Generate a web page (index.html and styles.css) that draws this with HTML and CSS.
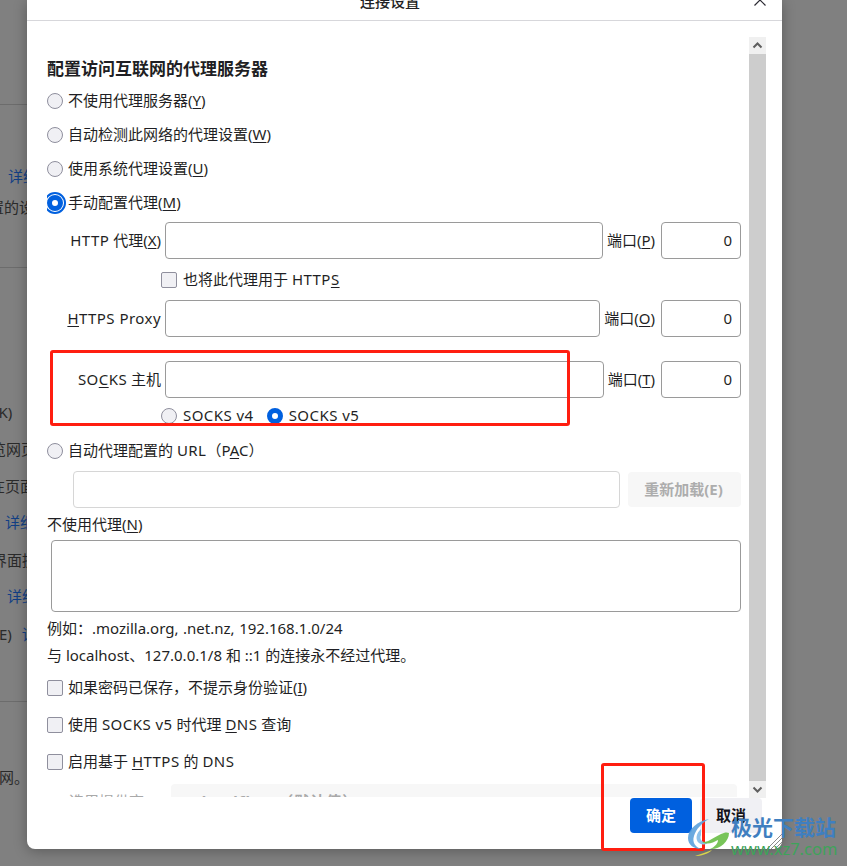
FILE: index.html
```html
<!DOCTYPE html>
<html lang="zh-CN">
<head>
<meta charset="utf-8">
<title>连接设置</title>
<link rel="stylesheet" href="styles.css">
</head>
<body>
<div class="page">
  <div class="page-rule r1"></div>
  <a class="frag link f1">详细信息</a>
  <div class="frag f2">置的设置</div>
  <div class="page-rule r2"></div>
  <div class="frag f3">(K)</div>
  <div class="frag f4">览网页</div>
  <div class="frag f5">在页面</div>
  <a class="frag link f6">详细</a>
  <div class="frag f7">界面提</div>
  <a class="frag link f8">详细</a>
  <div class="frag f9">E) <a class="link">详细</a></div>
  <div class="page-rule r3"></div>
  <div class="frag f10">网。</div>
</div>

<div class="dialog">
  <header class="dialog-head">
    <span class="dialog-title">连接设置</span>
    <svg class="close-icon" width="14" height="14" viewBox="0 0 14 14"><path d="M1.5 1.5 12.5 12.5M12.5 1.5 1.5 12.5" stroke="#2b2a33" stroke-width="1.2" fill="none"/></svg>
  </header>
  <div class="dialog-main">
    <div class="scroller">
      <h2 class="heading">配置访问互联网的代理服务器</h2>
      <label class="line m8"><input type="radio" name="p" class="radio"><span>不使用代理服务器(<u>Y</u>)</span></label>
      <label class="line m10"><input type="radio" name="p" class="radio"><span>自动检测此网络的代理设置(<u>W</u>)</span></label>
      <label class="line m10"><input type="radio" name="p" class="radio"><span>使用系统代理设置(<u>U</u>)</span></label>
      <label class="line m10"><input type="radio" name="p" class="radio focus" checked><span>手动配置代理(<u>M</u>)</span></label>

      <div class="proxy m7">
        <span class="proxy-label"><b class="la">HTTP</b> 代理(<u>X</u>)</span>
        <input class="field grow">
        <span class="port-label">端口(<u>P</u>)</span>
        <input class="field port" value="0">
      </div>
      <label class="line sub m9"><input type="checkbox" class="check"><span>也将此代理用于 <b class="la">HTTP<u>S</u></b></span></label>
      <div class="proxy m8">
        <span class="proxy-label"><b class="la"><u>H</u>TTPS Proxy</b></span>
        <input class="field grow">
        <span class="port-label">端口(<u>O</u>)</span>
        <input class="field port" value="0">
      </div>
      <div class="proxy m24">
        <span class="proxy-label"><b class="la">SO<u>C</u>KS</b> 主机</span>
        <input class="field grow">
        <span class="port-label">端口(<u>T</u>)</span>
        <input class="field port" value="0">
      </div>
      <div class="line sub versions m6">
        <label class="inline"><input type="radio" name="s" class="radio"><span>SOCKS v4</span></label>
        <label class="inline"><input type="radio" name="s" class="radio" checked><span>SOCKS v5</span></label>
      </div>
      <label class="line m11"><input type="radio" name="p" class="radio"><span>自动代理配置的 <b class="la">URL</b>（P<u>A</u>C）</span></label>
      <div class="pac m8">
        <input class="field grow off" disabled>
        <button class="reload" type="button">重新加载(E)</button>
      </div>
      <div class="line m5"><span>不使用代理(<u>N</u>)</span></div>
      <textarea class="field area m3"></textarea>
      <div class="line m5 tight"><span>例如：.mozilla.org, .net.nz, 192.168.1.0/24</span></div>
      <div class="line m3 flat"><span>与 localhost、127.0.0.1/8 和 ::1 的连接永不经过代理。</span></div>
      <label class="line m8"><input type="checkbox" class="check"><span>如果密码已保存，不提示身份验证(<u>I</u>)</span></label>
      <label class="line m13"><input type="checkbox" class="check"><span>使用 <b class="la">SOCKS v5</b> 时代理 <b class="la"><u>D</u>NS</b> 查询</span></label>
      <label class="line m13"><input type="checkbox" class="check"><span>启用基于 <b class="la"><u>H</u>TTPS</b> 的 <b class="la">DNS</b></span></label>
      <div class="provider">
        <span class="provider-label">选用提供商(P)</span>
        <span class="provider-select">Cloudflare（默认值）</span>
      </div>
    </div>
    <div class="scrollbar">
      <svg class="sb-arrow" width="17" height="17" viewBox="0 0 17 17"><path d="M4.5 10.5 8.5 6.5 12.5 10.5" stroke="#5f5f5f" stroke-width="2" fill="none"/></svg>
      <div class="sb-thumb"></div>
      <svg class="sb-arrow down" width="17" height="17" viewBox="0 0 17 17"><path d="M4.5 6.5 8.5 10.5 12.5 6.5" stroke="#5f5f5f" stroke-width="2" fill="none"/></svg>
    </div>
  </div>
  <footer class="dialog-foot">
    <button class="btn primary" type="button">确定</button>
    <button class="btn" type="button">取消</button>
  </footer>
  <svg class="resizer" width="16" height="16" viewBox="0 0 16 16"><path d="M1 16 16 1M5 16 16 5M9 16 16 9M13 16 16 13" stroke="#8a8a8a" stroke-width="1" fill="none"/></svg>
</div>

<div class="mark mark-socks"></div>
<div class="mark mark-ok"></div>

<div class="watermark">
  <svg class="wm-logo" width="42" height="42" viewBox="0 0 42 42">
    <path d="M21 4C10 6 0 14 0 23C0 30 6 34 13 34C7 32 4 27 6 21C8 14 14 8 21 4z" fill="#5aa0dc" opacity=".9"/>
    <path d="M13 14C8 18 7 25 11 28C16 31 20 29 19 27C15 28 11 25 13 20z" fill="#8cc0ea"/>
    <path d="M14 27C20 28 26 22 33 19C36 17.5 39 17 41 18C41 27 31 35 22 34C27 32 30 28 30 25C25 28 19 30 14 27z" fill="#6cbf4b" opacity=".92"/>
    <path d="M7 41C13 39 19 37 24 35C20 39 13 41 7 41z" fill="#d9d34a"/>
  </svg>
  <div class="wm-text">
    <span class="wm-name">极光下载站</span>
    <span class="wm-url">www.xz7.com</span>
  </div>
</div>
</body>
</html>
```
FILE: styles.css
```css
* { box-sizing: border-box; }
html, body { margin: 0; height: 100%; }
body {
  position: relative;
  width: 847px;
  height: 866px;
  overflow: hidden;
  background: #808080;
  font-family: "Noto Sans", "Noto Sans CJK SC", sans-serif;
  font-size: 15px;
  color: #1f1f24;
}
u { text-underline-offset: 2px; text-decoration-thickness: 1px; }
.la { font-weight: 400; letter-spacing: .45px; }

/* dimmed page behind the dialog */
.page {
  width: 27px;
  height: 866px;
  overflow: hidden;
  display: flex;
  flex-direction: column;
  color: #2a2a2a;
  line-height: 20px;
}
.page-rule { flex: none; height: 1px; width: 27px; background: #6c6c6c; }
.frag { flex: none; white-space: nowrap; height: 20px; }
.link { color: #123f85; }
.r1 { margin-top: 104px; }
.f1 { margin-top: 61px; margin-left: 8px; }
.f2 { margin-top: 11px; margin-left: -11px; }
.r2 { margin-top: 50px; }
.f3 { margin-top: 134px; margin-left: -6px; }
.f4 { margin-top: 17px; margin-left: -9px; }
.f5 { margin-top: 17px; margin-left: -10px; }
.f6 { margin-top: 16px; margin-left: 5px; }
.f7 { margin-top: 18px; margin-left: -8px; }
.f8 { margin-top: 16px; margin-left: 7px; }
.f9 { margin-top: 18px; margin-left: -1px; word-spacing: 6px; }
.r3 { margin-top: 57px; }
.f10 { margin-top: 65px; margin-left: -1px; }

/* dialog */
.dialog {
  position: absolute;
  left: 27px;
  top: 0;
  width: 755px;
  height: 849px;
  display: flex;
  flex-direction: column;
  background: #fff;
  border-radius: 0 0 8px 8px;
  box-shadow: 0 2px 14px rgba(0, 0, 0, .3);
}
.dialog-head {
  flex: none;
  height: 21px;
  border-bottom: 1px solid #d7d7db;
  display: flex;
  justify-content: space-between;
  overflow: hidden;
  padding: 0 15px 0 333px;
}
.dialog-title {
  font-size: 15px;
  font-weight: 500;
  line-height: 20px;
  margin-top: -9px;
  height: 20px;
  white-space: nowrap;
}
.close-icon { margin-top: -7px; }
.dialog-main {
  flex: none;
  height: 777px;
  display: flex;
  padding: 17px 16px 0 20px;
}
.scroller {
  width: 702px;
  height: 759px;
  overflow: hidden;
  flex: none;
}
.heading {
  margin: 19px 0 0;
  font-size: 17px;
  line-height: 24px;
  height: 24px;
  font-weight: 700;
  color: #1f1f24;
  white-space: nowrap;
}
.line {
  display: flex;
  align-items: center;
  height: 24px;
  width: 694px;
  white-space: nowrap;
  line-height: 24px;
}
.line span { margin-top: -2px; }
.tight { word-spacing: .7px; }
.sub { padding-left: 114px; }
.versions { gap: 13px; letter-spacing: .45px; }
.inline { display: flex; align-items: center; }
.m3 { margin-top: 3px; }
.m5 { margin-top: 5px; }
.m6 { margin-top: 6px; }
.m7 { margin-top: 7px; }
.m8 { margin-top: 8px; }
.m9 { margin-top: 9px; }
.m10 { margin-top: 10px; }
.m11 { margin-top: 11px; }
.m13 { margin-top: 13px; }
.m24 { margin-top: 24px; }

.radio, .check {
  appearance: none;
  flex: none;
  width: 16px;
  height: 16px;
  margin: 0 5px 0 0;
  background: #f0f0f4;
  border: 1px solid #8f8f9d;
}
.sub .radio, .sub .check { margin-right: 6px; }
.radio { border-radius: 50%; }
.check { border-radius: 2px; }
.radio:checked { background: #fff; border: 5px solid #0060df; }
.radio.focus { outline: 2px solid #0060df; outline-offset: 1.5px; }

.proxy { display: flex; align-items: center; gap: 4px; width: 694px; height: 37px; white-space: nowrap; }
.proxy-label { width: 114px; flex: none; text-align: right; margin-top: -2px; }
.port-label { margin-top: -2px; }
.field {
  display: block;
  height: 37px;
  border: 1px solid #9a9a9a;
  border-radius: 4px;
  background: #fff;
  font: inherit;
  color: inherit;
  padding: 0 8px;
  outline: none;
}
.grow { flex: 1; min-width: 0; }
.port { width: 80px; flex: none; margin-left: 2px; text-align: right; padding-bottom: 2px; }
.off { border-color: #d6d6d6; }
.pac { display: flex; align-items: center; gap: 8px; width: 694px; height: 37px; padding-left: 26px; }
.reload {
  flex: none;
  width: 113px;
  height: 35px;
  border: 0;
  border-radius: 4px;
  background: #f7f7f7;
  color: #adadad;
  font: 700 15px "Noto Sans", "Noto Sans CJK SC", sans-serif;
  padding: 0 2px 2px 0;
}
.area { width: 690px; height: 72px; margin-left: 4px; resize: none; }

.provider { display: flex; margin-top: 10px; height: 40px; }
.provider-label { width: 124px; padding: 6px 0 0 22px; color: #a9a9a9; white-space: nowrap; }
.provider-select {
  width: 566px;
  height: 36px;
  padding: 6px 0 0 20px;
  background: #f7f7f7;
  border-radius: 4px;
  color: #a9a9a9;
  font-weight: 700;
  letter-spacing: 1px;
  white-space: nowrap;
}

.scrollbar {
  flex: none;
  width: 17px;
  height: 761px;
  margin-top: -1px;
  background: #f0f0f0;
  display: flex;
  flex-direction: column;
  justify-content: space-between;
}
.sb-arrow { flex: none; display: block; }
.sb-thumb { flex: 1; background: #cdcdcd; margin-bottom: 28px; }
.sb-arrow.down { margin-top: -28px; margin-bottom: 0; }

.dialog-foot {
  flex: none;
  height: 51px;
  display: flex;
  justify-content: flex-end;
  gap: 8px;
  padding: 0 20px;
}
.btn {
  width: 62px;
  height: 35px;
  border: 0;
  border-radius: 4px;
  background: #f0f0f4;
  color: #15141a;
  font: 700 15px "Noto Sans", "Noto Sans CJK SC", sans-serif;
  padding: 0 0 2px;
}
.btn.primary { background: #0060df; color: #fff; }
.resizer { position: absolute; right: 0; bottom: 0; }

/* annotation overlays */
.mark { position: absolute; border: 3px solid #ff1e10; border-radius: 3px; }
.mark-socks { left: 50px; top: 350px; width: 520px; height: 76px; }
.mark-ok { left: 601px; top: 763px; width: 104px; height: 88px; }

/* watermark */
.watermark { position: absolute; left: 688px; top: 815px; display: flex; }
.wm-logo { flex: none; }
.wm-text { display: flex; flex-direction: column; margin-left: 1px; }
.wm-name { font-size: 21px; line-height: 24px; font-weight: 700; color: #3f7fc0; white-space: nowrap; }
.wm-url { font-size: 16.5px; line-height: 20px; color: #3ea35a; white-space: nowrap; }
```
